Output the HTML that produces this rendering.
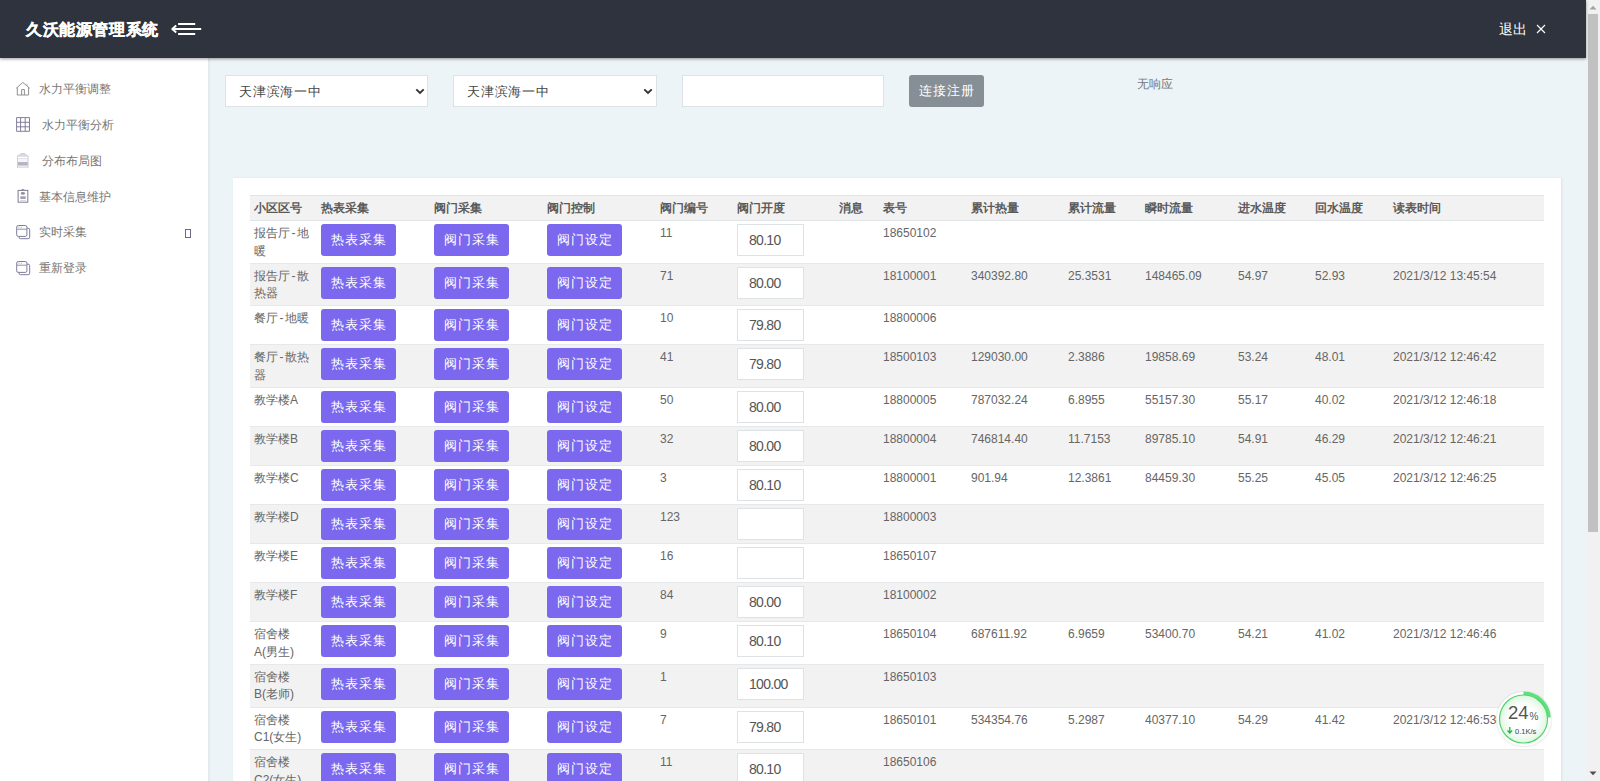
<!DOCTYPE html>
<html><head><meta charset="utf-8">
<style>
*{box-sizing:border-box;margin:0;padding:0}
html,body{width:1600px;height:781px;overflow:hidden;background:#edf4f7;font-family:"Liberation Sans",sans-serif}
#hdr{position:absolute;left:0;top:0;width:1586px;height:58px;background:#2f333e;box-shadow:0 1px 3px rgba(0,0,0,.4);z-index:5}
#title{position:absolute;left:26px;top:19px;font-size:16px;letter-spacing:0.6px;font-weight:bold;color:#fff;-webkit-text-stroke:0.35px #fff;line-height:22px;white-space:nowrap}
#menu{position:absolute;left:170px;top:20px;width:34px;height:18px}
#logout{position:absolute;left:1499px;top:19px;font-size:14px;color:#fff;line-height:20px;white-space:nowrap}
#xbtn{position:absolute;left:1536px;top:24px;width:10px;height:10px}
#side{position:absolute;left:0;top:58px;width:208px;height:723px;background:#fff}
#sideb{position:absolute;left:208px;top:58px;width:2px;height:723px;background:#e4eaed}
.mi{position:absolute;left:16px;height:20px;font-size:12px;color:#777;line-height:20px;white-space:nowrap}
.mi svg{position:absolute;left:0;top:2px}
.mi span{position:absolute;top:0}
#scroll{position:absolute;left:1586px;top:0;width:14px;height:781px;background:#f1f1f1}
#thumb{position:absolute;left:1588px;top:14px;width:10px;height:518px;background:#c1c1c1}
.sel{position:absolute;top:75px;height:32px;background:#fff;border:1px solid #dde2e5;font-size:13px;letter-spacing:0.8px;color:#444;line-height:32px;padding-left:13px}
.sel svg{position:absolute;right:2.5px;top:11.5px}
#txt{position:absolute;left:682px;top:75px;width:202px;height:32px;background:#fff;border:1px solid #dde2e5}
#reg{position:absolute;left:909px;top:75px;width:75px;height:32px;background:#868e96;border-radius:3px;color:#fff;font-size:13px;letter-spacing:0.8px;text-indent:0.8px;line-height:32px;text-align:center}
#noresp{position:absolute;left:1137px;top:76px;font-size:12px;color:#777;line-height:16px}
#card{position:absolute;left:233px;top:178px;width:1328px;height:620px;background:#fff;box-shadow:1px 0 2px rgba(0,0,0,.08)}
table{position:absolute;left:250px;top:195px;width:1294px;border-collapse:separate;border-spacing:0;table-layout:fixed;font-size:12px;color:#666}
th{height:26px;background:#f2f2f2;border-top:1px solid #e1e4e7;border-bottom:1px solid #e1e4e7;text-align:left;font-weight:bold;color:#5a5a5a;padding:0 0 1px 4px;line-height:16px;vertical-align:middle}
td{vertical-align:top;padding:4px 0 0 4px;line-height:17.5px;border-bottom:1px solid #e6e8ea}
td.c1{padding-top:4px;color:#666}
td.b{padding-top:3px}
.hy{margin:0 1.5px}
tr.even td{background:#f2f2f2}
tr.l1 td{height:39.1px}
tr.l2 td{height:42.58px}
.btn{display:block;width:75px;height:32px;background:#7b68ee;border-radius:3px;color:#fff;font-size:13px;letter-spacing:1px;text-indent:1px;line-height:32px;text-align:center}
.inp{display:block;width:67px;height:32px;background:#fff;border:1px solid #dde2e5;font-size:14px;letter-spacing:-0.7px;color:#555;line-height:31px;padding-left:11px}
#widget{position:absolute;left:1496px;top:691px;width:56px;height:56px}
</style></head><body>
<div id="hdr">
 <div id="title">久沃能源管理系统</div>
 <svg id="menu" viewBox="0 0 34 18"><path d="M2.5 9 H31.2 M8.1 4 H25.2 M8.1 14 H25.2" stroke="#fff" stroke-width="2" fill="none"/><path d="M6.2 5.6 L2.3 9 L6.2 12.4" stroke="#fff" stroke-width="2" fill="none" stroke-linejoin="round"/></svg>
 <div id="logout">退出</div>
 <svg id="xbtn" viewBox="0 0 10 10"><path d="M1 1 L9 9 M9 1 L1 9" stroke="#fff" stroke-width="1.1" fill="none"/></svg>
</div>
<div id="side"></div>
<div id="sideb"></div>
<div class="mi" style="top:79px"><svg width="15" height="16" viewBox="0 0 15 16"><path d="M0.4 7.2 L6.8 1.4 L13.6 7.2 M1.3 6.2 V14 H12.6 V6.2 M5.6 14 V8.6 H8.4 V14" stroke="#8a8a8a" stroke-width="0.95" fill="none"/><path d="M11 2.6 V4.8" stroke="#b5b5b5" stroke-width="1"/></svg><span style="left:22.5px">水力平衡调整</span></div>
<div class="mi" style="top:115px"><svg width="15" height="16" viewBox="0 0 15 16" style="top:2px"><path d="M0.6 0.6 H13.5 V14.3 H0.6 Z M4.6 0.6 V14.3 M9.2 0.6 V14.3 M0.6 5.3 H13.5 M0.6 9.8 H13.5" stroke="#7d7896" stroke-width="0.95" fill="none"/></svg><span style="left:26px">水力平衡分析</span></div>
<div class="mi" style="top:151px"><svg width="15" height="16" viewBox="0 0 15 16" style="top:2px"><rect x="4.5" y="0" width="4.5" height="1.6" fill="#cfcfdc"/><rect x="2.5" y="1.2" width="8.5" height="1.4" fill="#d5d5e0"/><rect x="1" y="2.4" width="11.6" height="12.4" fill="#cfcfda"/><rect x="2" y="3.6" width="9.6" height="1.6" fill="#fff"/><rect x="2" y="5.6" width="9.6" height="3.4" fill="#f4f4fa"/><rect x="2" y="9.2" width="9.6" height="3" fill="#b4b4be"/><rect x="2" y="12.2" width="9.6" height="1.2" fill="#d6d6de"/><rect x="2" y="13.4" width="9.6" height="0.9" fill="#f2f2f5"/></svg><span style="left:26px">分布布局图</span></div>
<div class="mi" style="top:187px"><svg width="15" height="16" viewBox="0 0 15 16" style="top:2px"><rect x="2.1" y="1.4" width="9.7" height="11.8" stroke="#7c7c90" stroke-width="1" fill="none"/><ellipse cx="6.9" cy="1" rx="1.6" ry="0.9" fill="#8a8aa0"/><ellipse cx="6.9" cy="4.4" rx="2.1" ry="1.3" fill="#8e8ea2"/><rect x="4.3" y="7.3" width="5.4" height="2.7" fill="#a0a0b2"/><rect x="4" y="11.1" width="6" height="0.8" fill="#d2d2da"/></svg><span style="left:23px">基本信息维护</span></div>
<div class="mi" style="top:222px"><svg width="15" height="16" viewBox="0 0 15 16" style="top:2px"><rect x="3" y="4.2" width="10.7" height="10.5" rx="1.6" stroke="#7d7d98" stroke-width="1" fill="#fff"/><rect x="0.7" y="1.5" width="10.2" height="10.9" rx="1.6" stroke="#7d7d98" stroke-width="1" fill="#fff"/><path d="M0.7 5.2 H10.9" stroke="#9a9aae" stroke-width="1.1"/><path d="M1.8 3.2 H6.4" stroke="#b0b0c0" stroke-width="0.9" stroke-dasharray="1 0.6"/></svg><span style="left:22.5px">实时采集</span></div>
<div class="mi" style="top:258px"><svg width="15" height="16" viewBox="0 0 15 16" style="top:2px"><rect x="3" y="4.2" width="10.7" height="10.5" rx="1.6" stroke="#7d7d98" stroke-width="1" fill="#fff"/><rect x="0.7" y="1.5" width="10.2" height="10.9" rx="1.6" stroke="#7d7d98" stroke-width="1" fill="#fff"/><path d="M0.7 5.2 H10.9" stroke="#9a9aae" stroke-width="1.1"/><path d="M1.8 3.2 H6.4" stroke="#b0b0c0" stroke-width="0.9" stroke-dasharray="1 0.6"/></svg><span style="left:22.5px">重新登录</span></div>
<div style="position:absolute;left:185px;top:229px;width:6px;height:9px;border:1px solid #6b6b88"></div>

<div class="sel" style="left:225px;width:203px">天津滨海一中<svg width="10" height="7" viewBox="0 0 10 7"><path d="M1.3 1.3 L5 5 L8.7 1.3" stroke="#333" stroke-width="1.9" fill="none"/></svg></div>
<div class="sel" style="left:453px;width:203.5px">天津滨海一中<svg width="10" height="7" viewBox="0 0 10 7"><path d="M1.3 1.3 L5 5 L8.7 1.3" stroke="#333" stroke-width="1.9" fill="none"/></svg></div>
<div id="txt"></div>
<div id="reg">连接注册</div>
<div id="noresp">无响应</div>

<div id="card"></div>
<table>
<colgroup><col style="width:67px"><col style="width:113px"><col style="width:113px"><col style="width:113px"><col style="width:77px"><col style="width:102px"><col style="width:44px"><col style="width:88px"><col style="width:97px"><col style="width:77px"><col style="width:93px"><col style="width:77px"><col style="width:78px"><col style="width:155px"></colgroup>
<thead><tr><th>小区区号</th><th>热表采集</th><th>阀门采集</th><th>阀门控制</th><th>阀门编号</th><th>阀门开度</th><th>消息</th><th>表号</th><th>累计热量</th><th>累计流量</th><th>瞬时流量</th><th>进水温度</th><th>回水温度</th><th>读表时间</th></tr></thead>
<tbody>
<tr class="odd l2"><td class="c1">报告厅<span class="hy">-</span>地<br>暖</td><td class="b"><span class="btn">热表采集</span></td><td class="b"><span class="btn">阀门采集</span></td><td class="b"><span class="btn">阀门设定</span></td><td>11</td><td class="b"><span class="inp">80.10</span></td><td></td><td>18650102</td><td></td><td></td><td></td><td></td><td></td><td></td></tr>
<tr class="even l2"><td class="c1">报告厅<span class="hy">-</span>散<br>热器</td><td class="b"><span class="btn">热表采集</span></td><td class="b"><span class="btn">阀门采集</span></td><td class="b"><span class="btn">阀门设定</span></td><td>71</td><td class="b"><span class="inp">80.00</span></td><td></td><td>18100001</td><td>340392.80</td><td>25.3531</td><td>148465.09</td><td>54.97</td><td>52.93</td><td>2021/3/12 13:45:54</td></tr>
<tr class="odd l1"><td class="c1">餐厅<span class="hy">-</span>地暖</td><td class="b"><span class="btn">热表采集</span></td><td class="b"><span class="btn">阀门采集</span></td><td class="b"><span class="btn">阀门设定</span></td><td>10</td><td class="b"><span class="inp">79.80</span></td><td></td><td>18800006</td><td></td><td></td><td></td><td></td><td></td><td></td></tr>
<tr class="even l2"><td class="c1">餐厅<span class="hy">-</span>散热<br>器</td><td class="b"><span class="btn">热表采集</span></td><td class="b"><span class="btn">阀门采集</span></td><td class="b"><span class="btn">阀门设定</span></td><td>41</td><td class="b"><span class="inp">79.80</span></td><td></td><td>18500103</td><td>129030.00</td><td>2.3886</td><td>19858.69</td><td>53.24</td><td>48.01</td><td>2021/3/12 12:46:42</td></tr>
<tr class="odd l1"><td class="c1">教学楼A</td><td class="b"><span class="btn">热表采集</span></td><td class="b"><span class="btn">阀门采集</span></td><td class="b"><span class="btn">阀门设定</span></td><td>50</td><td class="b"><span class="inp">80.00</span></td><td></td><td>18800005</td><td>787032.24</td><td>6.8955</td><td>55157.30</td><td>55.17</td><td>40.02</td><td>2021/3/12 12:46:18</td></tr>
<tr class="even l1"><td class="c1">教学楼B</td><td class="b"><span class="btn">热表采集</span></td><td class="b"><span class="btn">阀门采集</span></td><td class="b"><span class="btn">阀门设定</span></td><td>32</td><td class="b"><span class="inp">80.00</span></td><td></td><td>18800004</td><td>746814.40</td><td>11.7153</td><td>89785.10</td><td>54.91</td><td>46.29</td><td>2021/3/12 12:46:21</td></tr>
<tr class="odd l1"><td class="c1">教学楼C</td><td class="b"><span class="btn">热表采集</span></td><td class="b"><span class="btn">阀门采集</span></td><td class="b"><span class="btn">阀门设定</span></td><td>3</td><td class="b"><span class="inp">80.10</span></td><td></td><td>18800001</td><td>901.94</td><td>12.3861</td><td>84459.30</td><td>55.25</td><td>45.05</td><td>2021/3/12 12:46:25</td></tr>
<tr class="even l1"><td class="c1">教学楼D</td><td class="b"><span class="btn">热表采集</span></td><td class="b"><span class="btn">阀门采集</span></td><td class="b"><span class="btn">阀门设定</span></td><td>123</td><td class="b"><span class="inp"></span></td><td></td><td>18800003</td><td></td><td></td><td></td><td></td><td></td><td></td></tr>
<tr class="odd l1"><td class="c1">教学楼E</td><td class="b"><span class="btn">热表采集</span></td><td class="b"><span class="btn">阀门采集</span></td><td class="b"><span class="btn">阀门设定</span></td><td>16</td><td class="b"><span class="inp"></span></td><td></td><td>18650107</td><td></td><td></td><td></td><td></td><td></td><td></td></tr>
<tr class="even l1"><td class="c1">教学楼F</td><td class="b"><span class="btn">热表采集</span></td><td class="b"><span class="btn">阀门采集</span></td><td class="b"><span class="btn">阀门设定</span></td><td>84</td><td class="b"><span class="inp">80.00</span></td><td></td><td>18100002</td><td></td><td></td><td></td><td></td><td></td><td></td></tr>
<tr class="odd l2"><td class="c1">宿舍楼<br>A(男生)</td><td class="b"><span class="btn">热表采集</span></td><td class="b"><span class="btn">阀门采集</span></td><td class="b"><span class="btn">阀门设定</span></td><td>9</td><td class="b"><span class="inp">80.10</span></td><td></td><td>18650104</td><td>687611.92</td><td>6.9659</td><td>53400.70</td><td>54.21</td><td>41.02</td><td>2021/3/12 12:46:46</td></tr>
<tr class="even l2"><td class="c1">宿舍楼<br>B(老师)</td><td class="b"><span class="btn">热表采集</span></td><td class="b"><span class="btn">阀门采集</span></td><td class="b"><span class="btn">阀门设定</span></td><td>1</td><td class="b"><span class="inp">100.00</span></td><td></td><td>18650103</td><td></td><td></td><td></td><td></td><td></td><td></td></tr>
<tr class="odd l2"><td class="c1">宿舍楼<br>C1(女生)</td><td class="b"><span class="btn">热表采集</span></td><td class="b"><span class="btn">阀门采集</span></td><td class="b"><span class="btn">阀门设定</span></td><td>7</td><td class="b"><span class="inp">79.80</span></td><td></td><td>18650101</td><td>534354.76</td><td>5.2987</td><td>40377.10</td><td>54.29</td><td>41.42</td><td>2021/3/12 12:46:53</td></tr>
<tr class="even l2"><td class="c1">宿舍楼<br>C2(女生)</td><td class="b"><span class="btn">热表采集</span></td><td class="b"><span class="btn">阀门采集</span></td><td class="b"><span class="btn">阀门设定</span></td><td>11</td><td class="b"><span class="inp">80.10</span></td><td></td><td>18650106</td><td></td><td></td><td></td><td></td><td></td><td></td></tr>
</tbody>
</table>

<svg id="widget" viewBox="0 0 56 56">
 <defs><radialGradient id="rg" cx="50%" cy="50%" r="50%"><stop offset="55%" stop-color="#fff"/><stop offset="100%" stop-color="#dff6e2"/></radialGradient>
 <filter id="sh" x="-20%" y="-20%" width="140%" height="140%"><feGaussianBlur stdDeviation="1"/></filter></defs>
 <circle cx="28" cy="28.3" r="27.6" fill="#000" opacity=".13" filter="url(#sh)"/>
 <circle cx="28" cy="28" r="27.3" fill="#fff"/>
 <path d="M27.5 2.3 A25.7 25.7 0 0 1 53.2 26.5" stroke="#5ee07e" stroke-width="3.4" fill="none"/>
 <circle cx="27.5" cy="28" r="24" fill="url(#rg)" stroke="#4fd46c" stroke-width="1.2"/>
 <text x="12" y="28" font-family="Liberation Sans" font-size="18.5" fill="#555">24</text>
 <text x="33.5" y="29" font-family="Liberation Sans" font-size="10" fill="#555">%</text>
 <path d="M13.8 36 V41.5 M11.5 39.5 L13.8 42 L16.1 39.5" stroke="#27b548" stroke-width="1.3" fill="none"/>
 <text x="19" y="42.5" font-family="Liberation Sans" font-size="7.5" fill="#555" stroke="#555" stroke-width=".1">0.1K/s</text>
</svg>

<div id="scroll"></div><div id="thumb"></div>
<svg style="position:absolute;left:1589px;top:5px" width="8" height="5" viewBox="0 0 8 5"><path d="M0.5 4.5 L4 0.8 L7.5 4.5 Z" fill="#a3a3a3"/></svg>
<svg style="position:absolute;left:1589px;top:771px" width="8" height="5" viewBox="0 0 8 5"><path d="M0.5 0.5 L4 4.2 L7.5 0.5 Z" fill="#505050"/></svg>
</body></html>
